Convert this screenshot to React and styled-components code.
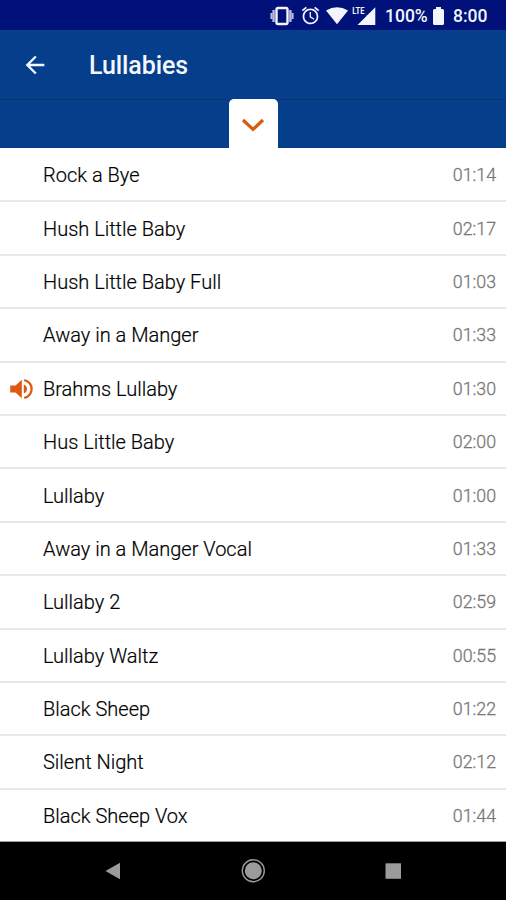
import React from 'react';

import styled, { createGlobalStyle } from 'styled-components';
import { MdAccessAlarm, MdArrowBack } from 'react-icons/md';

const SONGS = [
    { name: 'Rock a Bye', time: '01:14' },
    { name: 'Hush Little Baby', time: '02:17' },
    { name: 'Hush Little Baby Full', time: '01:03' },
    { name: 'Away in a Manger', time: '01:33' },
    { name: 'Brahms Lullaby', time: '01:30', playing: true },
    { name: 'Hus Little Baby', time: '02:00' },
    { name: 'Lullaby', time: '01:00' },
    { name: 'Away in a Manger Vocal', time: '01:33' },
    { name: 'Lullaby 2', time: '02:59' },
    { name: 'Lullaby Waltz', time: '00:55' },
    { name: 'Black Sheep', time: '01:22' },
    { name: 'Silent Night', time: '02:12' },
    { name: 'Black Sheep Vox', time: '01:44' },
];

const GlobalStyle = createGlobalStyle`
    body {
        margin: 0;
        background: #fff;
        font-family: Roboto, sans-serif;
    }
`

const Screen = styled.div`
    width: 506px;
    height: 900px;
    display: flex;
    flex-direction: column;
    overflow: hidden;
`

const StatusBar = styled.div`
    height: 30px;
    flex-shrink: 0;
    box-sizing: border-box;
    padding: 1px 19px 0 0;
    display: flex;
    align-items: center;
    justify-content: flex-end;
    background: #00117a;
    color: #f4f5fc;

    svg {
        display: block;
        flex-shrink: 0;
    }
`

const StatusText = styled.span`
    width: ${({ $width }) => $width}px;
    font-size: 17.5px;
    font-weight: 500;
    line-height: 28px;
    white-space: nowrap;
`

const Gap = styled.span`
    width: ${({ $size }) => $size}px;
    flex-shrink: 0;
`

const TitleBar = styled.header`
    height: 70px;
    flex-shrink: 0;
    box-sizing: border-box;
    padding: 0 0 0 21px;
    display: flex;
    align-items: center;
    background: #053f8b;
    border-bottom: 1px solid #08366f;
    color: #f4f7ff;
`

const Title = styled.h1`
    margin: 3px 0 0 40px;
    font-size: 25px;
    font-weight: 500;
    line-height: 30px;
    letter-spacing: -0.1px;
`

const TabStrip = styled.div`
    height: 48px;
    flex-shrink: 0;
    display: flex;
    justify-content: center;
    background: #053f8b;
`

const Tab = styled.button`
    width: 49px;
    height: 49px;
    margin-top: -1px;
    padding: 2px 0 0;
    border: 0;
    border-radius: 5px 5px 0 0;
    display: flex;
    align-items: center;
    justify-content: center;
    background: #fff;
    color: #d75a12;
`

const SongList = styled.ul`
    flex: 1;
    box-sizing: border-box;
    margin: 0;
    padding: 1px 0 0;
    list-style: none;
    display: flex;
    flex-direction: column;
    background: #fff;
`

const SongRow = styled.li`
    flex: 1;
    box-sizing: border-box;
    padding: 1px 10px 0 9px;
    display: flex;
    align-items: center;
    border-bottom: 2px solid #e8e8e8;

    &:last-child {
        border-bottom: 1px solid #a0a0a0;
    }
`

const IconSlot = styled.span`
    width: 34px;
    display: flex;
    color: #dc5a12;
`

const SongName = styled.span`
    flex: 1;
    color: #000;
    font-size: 20px;
    font-weight: 300;
    line-height: 26px;
    -webkit-text-stroke: 0.2px #000;
`

const SongTime = styled.span`
    color: #777;
    font-size: 17.8px;
    font-weight: 300;
    line-height: 26px;
    -webkit-text-stroke: 0.3px #777;
`

const NavBar = styled.nav`
    height: 58px;
    flex-shrink: 0;
    box-sizing: border-box;
    padding: 0 99px;
    display: flex;
    align-items: center;
    justify-content: space-between;
    background: #000;
`

const LteLabel = styled.text`
    font: 700 9px Roboto, sans-serif;
`

const VibrateIcon = () => (
    <svg width="24" height="20" viewBox="0 0 24 20" fill="none" stroke="currentColor">
        <rect x="6.5" y="2" width="11" height="16" rx="1.5" strokeWidth="2.4" />
        <path d="M3.6 4V16M20.4 4V16" strokeWidth="2.4" opacity="0.75" />
        <path d="M1.4 7V13M22.6 7V13" strokeWidth="2" opacity="0.75" />
    </svg>
);

const WifiIcon = () => (
    <svg width="22" height="18" viewBox="0 0 22 18">
        <path d="M0 3.6Q11-3.2 22 3.6L11 17.2Z" fill="currentColor" />
    </svg>
);

const SignalIcon = () => (
    <svg width="24" height="20" viewBox="0 0 24 20" fill="currentColor">
        <LteLabel x="0.3" y="8.3" textLength="12.2" lengthAdjust="spacingAndGlyphs">LTE</LteLabel>
        <path d="M23.3 1.2V19H5.5L14.3 10.2V9.5H15Z" />
    </svg>
);

const BatteryIcon = () => (
    <svg width="11" height="18" viewBox="0 0 11 18">
        <path d="M3 0H8V2H9.5Q11 2 11 3.5V16.5Q11 18 9.5 18H1.5Q0 18 0 16.5V3.5Q0 2 1.5 2H3Z" fill="currentColor" />
    </svg>
);

const ChevronIcon = () => (
    <svg width="24" height="16" viewBox="0 0 24 16">
        <path d="M2 3L12 12.4L22 3" fill="none" stroke="currentColor" strokeWidth="3.2" />
    </svg>
);

const SpeakerIcon = () => (
    <svg width="25" height="22" viewBox="0 0 25 22">
        <path d="M1.2 7.5H6.5L12.8 1.7V20.3L6.5 14.5H1.2Z" fill="currentColor" />
        <path d="M14.8 6.5Q18 8 18 11T14.8 15.5Z" fill="currentColor" />
        <path d="M15.2 2Q22.6 4.3 22.6 11T15.2 20" fill="none" stroke="currentColor" strokeWidth="2.3" />
    </svg>
);

const NavIcon = ({ children }) => (
    <svg width="28" height="28" viewBox="0 0 28 28" fill="#9b9b9b">{children}</svg>
);

const App = () => (
    <Screen>
        <GlobalStyle />
        <StatusBar>
            <VibrateIcon />
            <Gap $size={6} />
            <MdAccessAlarm size={21} />
            <Gap $size={5} />
            <WifiIcon />
            <Gap $size={4} />
            <SignalIcon />
            <Gap $size={9} />
            <StatusText $width={44}>100%</StatusText>
            <Gap $size={4} />
            <BatteryIcon />
            <Gap $size={9} />
            <StatusText $width={34}>8:00</StatusText>
        </StatusBar>
        <TitleBar>
            <MdArrowBack size={28} />
            <Title>Lullabies</Title>
        </TitleBar>
        <TabStrip>
            <Tab aria-label="Show player">
                <ChevronIcon />
            </Tab>
        </TabStrip>
        <SongList>
            {SONGS.map(({ name, time, playing }) => (
                <SongRow key={name}>
                    <IconSlot>{playing && <SpeakerIcon />}</IconSlot>
                    <SongName>{name}</SongName>
                    <SongTime>{time}</SongTime>
                </SongRow>
            ))}
        </SongList>
        <NavBar>
            <NavIcon>
                <path d="M6.5 14L21 5.8V22.2Z" />
            </NavIcon>
            <NavIcon>
                <circle cx="14.3" cy="13.8" r="8.5" />
                <circle cx="14.3" cy="13.8" r="11" fill="none" stroke="#9b9b9b" strokeWidth="1.4" />
            </NavIcon>
            <NavIcon>
                <path d="M6.5 6.3H22V21.8H6.5Z" />
            </NavIcon>
        </NavBar>
    </Screen>
);

export default App;
